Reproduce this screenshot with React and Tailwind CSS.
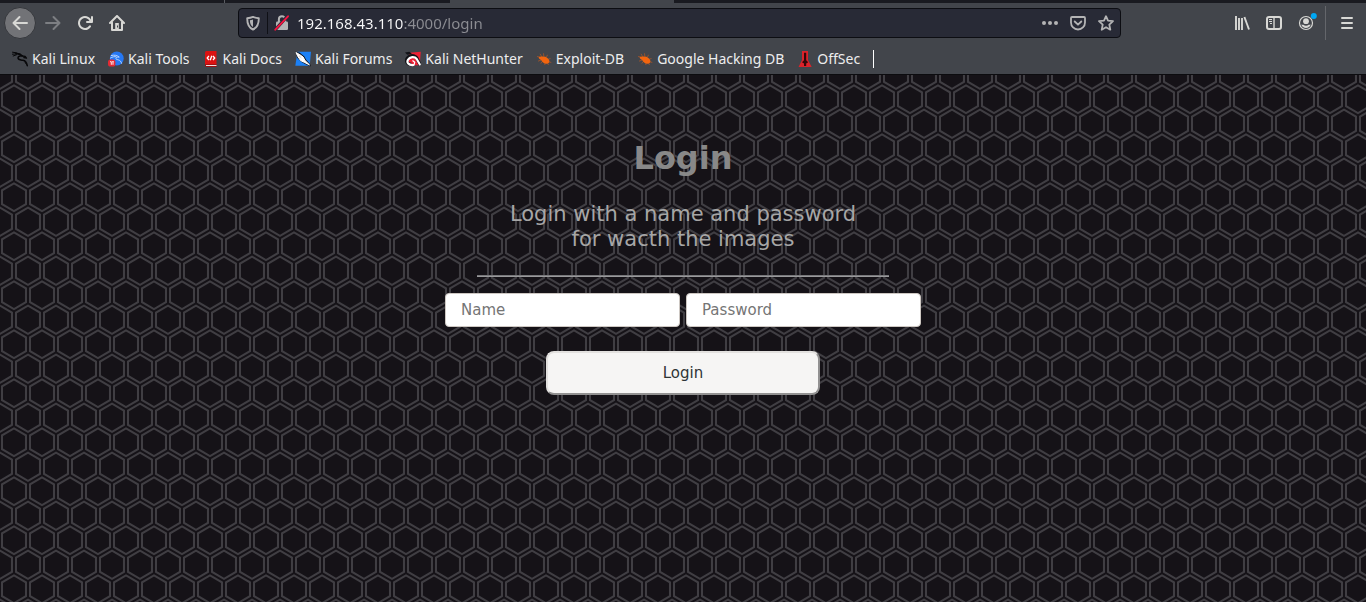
import React from "react";

const iconClass = "size-4 shrink-0";

function BackIcon() {
  return (
    <svg viewBox="0 0 16 16" className={iconClass} fill="none" stroke="currentColor" strokeWidth="2" strokeLinecap="round" strokeLinejoin="round">
      <path d="M15 8H1.5M7.500 2L1.500 8l6 6" />
    </svg>
  );
}

function ForwardIcon() {
  return (
    <svg viewBox="0 0 16 16" className={iconClass} fill="none" stroke="currentColor" strokeWidth="2" strokeLinecap="round" strokeLinejoin="round">
      <path d="M1 8h13.500M8.500 2l6 6-6 6" />
    </svg>
  );
}

function ReloadIcon() {
  return (
    <svg viewBox="0 0 16 16" className={iconClass} fill="currentColor">
      <path d="M15 1a1 1 0 0 0-1 1v2.420A7 7 0 1 0 8 15a7 7 0 0 0 5.800-3.080 1 1 0 1 0-1.660-1.120A5 5 0 1 1 12.540 6H10a1 1 0 0 0 0 2h5a1 1 0 0 0 1-1V2a1 1 0 0 0-1-1z" />
    </svg>
  );
}

function HomeIcon() {
  return (
    <svg viewBox="0 0 16 16" className={iconClass} fill="none" stroke="currentColor" strokeWidth="2" strokeLinecap="round" strokeLinejoin="round">
      <path d="M1 8l7-7 7 7" />
      <path d="M3 7.500V15h10V7.500" />
      <path d="M8 8v6.500" strokeWidth="3.600" strokeLinecap="butt" />
      <path d="M8.500 10.500v2" stroke="#42454b" strokeWidth="1" strokeLinecap="butt" />
    </svg>
  );
}

function ShieldIcon() {
  return (
    <svg viewBox="0 0 16 16" className={iconClass}>
      <path d="M8 1.900c-2 .9-4 1.200-5.800 1.300 0 5.300 1 9.300 5.800 11.300 4.800-2 5.800-6 5.800-11.300C12 3.100 10 2.800 8 1.900z" fill="none" stroke="currentColor" strokeWidth="1.900" strokeLinejoin="round" />
      <path d="M8 4.500c-1 .5-2 .7-3.100.8.1 3.200.7 5.300 3.100 6.700z" fill="currentColor" />
    </svg>
  );
}

function InsecureIcon() {
  return (
    <svg viewBox="0 0 16 16" className={iconClass}>
      <path d="M4.900 7V4.300a3.100 3.100 0 0 1 6.200 0V7" fill="none" stroke="currentColor" strokeWidth="2" />
      <rect x="2" y="6.500" width="12" height="8.500" rx="1.200" fill="currentColor" />
      <path d="M.8 15.200L13.800.8" stroke="#282a36" strokeWidth="3.200" />
      <path d="M1.300 14.700L14 1.300" stroke="#f8123f" strokeWidth="1.900" strokeLinecap="round" />
    </svg>
  );
}

function MoreIcon() {
  return (
    <svg viewBox="0 0 16 16" className={iconClass} fill="currentColor">
      <circle cx="2" cy="8" r="2" />
      <circle cx="8" cy="8" r="2" />
      <circle cx="14" cy="8" r="2" />
    </svg>
  );
}

function PocketIcon() {
  return (
    <svg viewBox="0 0 16 16" className={iconClass} fill="none" stroke="currentColor" strokeLinecap="round" strokeLinejoin="round">
      <path d="M2 2h12a1 1 0 0 1 1 1v4.500a7 7 0 0 1-14 0V3a1 1 0 0 1 1-1z" strokeWidth="1.800" />
      <path d="M4.700 6.500L8 9.700l3.300-3.200" strokeWidth="1.800" />
    </svg>
  );
}

function StarIcon() {
  return (
    <svg viewBox="0 0 16 16" className={iconClass} fill="none" stroke="currentColor" strokeWidth="1.800" strokeLinejoin="round">
      <path d="M8 1.200l2 4.500 5 .5-3.700 3.400 1 5.100L8 12.200l-4.300 2.500 1-5.100L1 6.200l5-.5z" />
    </svg>
  );
}

function LibraryIcon() {
  return (
    <svg viewBox="0 0 16 16" className={iconClass} fill="none" stroke="currentColor">
      <path d="M2 1v14M5 3v12M8 3v12" strokeWidth="1.900" />
      <path d="M10.400 2l4.600 12.500" strokeWidth="1.900" />
    </svg>
  );
}

function SidebarIcon() {
  return (
    <svg viewBox="0 0 16 16" className={iconClass} fill="none" stroke="currentColor">
      <rect x="1" y="2" width="14" height="12" rx="2" strokeWidth="2" />
      <path d="M8 2v12" strokeWidth="1.400" />
      <path d="M3 4.500h3M3 6.500h3M4 8.500h2" strokeWidth="1" />
    </svg>
  );
}

function AccountIcon() {
  return (
    <svg viewBox="0 0 16 16" className="size-4 shrink-0 overflow-visible">
      <circle cx="8" cy="8" r="6.500" fill="none" stroke="currentColor" strokeWidth="1.200" />
      <circle cx="8" cy="6.200" r="2.900" fill="currentColor" />
      <path d="M3.300 9.500c.8.3 1.500.4 2 .2.800.8 1.700 1.100 2.700 1.100s1.900-.3 2.700-1.100c.5.2 1.200.1 2-.2-.6 2.200-2.400 3.600-4.700 3.600S3.900 11.700 3.300 9.500z" fill="currentColor" />
      <circle cx="15.800" cy="1" r="3" fill="#00a8f5" />
    </svg>
  );
}

function MenuIcon() {
  return (
    <svg viewBox="0 0 16 16" className={iconClass} fill="none" stroke="currentColor" strokeWidth="2" strokeLinecap="round">
      <path d="M3 3h10M3 8h10M3 13h10" />
    </svg>
  );
}

function DragonIcon() {
  return (
    <svg viewBox="0 0 16 16" className={iconClass} fill="none" stroke="#08080a" strokeLinecap="round" strokeLinejoin="round">
      <path d="M.5 1.200l4 .6 2.500 1.400M.3 3.200l4-.3M1.200 5l3.300-1.200" strokeWidth="1" />
      <path d="M4 2.700c2.300-.1 4.500.3 6 2.100" strokeWidth="1.700" />
      <path d="M10 4.800c-2-.3-4 .7-4 2.300 0 2 2.500 1.900 5 2.200 2.300.3 3.600 1.900 4.300 5.400" strokeWidth="1.500" />
      <path d="M10 4.800l3.200.7 1.300 1.700-2.700-.5" strokeWidth="1.300" />
      <path d="M13.300 10.300c-.9 1.600 1 2.500 1.900 4" strokeWidth="1" />
    </svg>
  );
}

function ToolsIcon() {
  return (
    <svg viewBox="0 0 16 16" className={iconClass}>
      <circle cx="8.800" cy="7.500" r="6.900" fill="#2578f5" />
      <path d="M3.300 4.500c3-.8 6-.3 7.600 1.400M2.500 7c2-1.300 4-1.600 5.500-1.200M11 6c-2.200-.2-3.600.8-3 1.900.8 1.300 4.700.2 5.600 4.400" fill="none" stroke="#bcd7ff" strokeWidth="1" strokeLinecap="round" />
      <rect x="0" y="8.600" width="7.400" height="7" rx="2.600" fill="#e42a34" />
      <path d="M2 10.700h1.300v3.100M5 10.500v3.300M4.200 10.700h1.500" fill="none" stroke="#fff" strokeWidth=".9" />
    </svg>
  );
}

function DocsIcon() {
  return (
    <svg viewBox="0 0 16 16" className={iconClass}>
      <path d="M3 0h10.500v13.700H2V1.200z" fill="#dc1212" />
      <path d="M2 13.300h11.500V16H3.200L2 14.700z" fill="#9d0e10" />
      <path d="M3 14h10.500v1H3z" fill="#f1dfdf" />
      <path d="M5.900 5L4.200 7l1.700 2M10 5l1.700 2L10 9M8.800 4.700L7.200 9.300" fill="none" stroke="#fff" strokeWidth="1.300" />
    </svg>
  );
}

function ForumsIcon() {
  return (
    <svg viewBox="0 0 16 16" className={iconClass}>
      <path d="M2.500.7H16l-1.300 14H.3z" fill="#1b80f5" />
      <path d="M0 .8l4.500.7 4.700 3.700 2 3.600 4.600 5.200-.4 1.500L10 13 6.500 11 2.500 7.300z" fill="#15161b" />
      <path d="M.9 1.500l4 2.200 3.300 2.400 1.600 3.200 4.700 4.600-5.300-2.600-3.600-1.700L3 5.800z" fill="#fff" stroke="#fff" strokeWidth="1" strokeLinejoin="round" />
      <path d="M4 4.800l2.300 2" stroke="#9aa4b5" strokeWidth=".6" />
    </svg>
  );
}

function NetHunterIcon() {
  return (
    <svg viewBox="0 0 16 16" className={iconClass}>
      <path d="M4.500 1.800L15.800.8l-1.100 13.500H3z" fill="#ed2034" />
      <path d="M0 1.500l4.400-.7 2.500 2-4.600 1z" fill="#121318" />
      <path d="M6.500 13.500C2 13.300.6 10 2.400 7.300 4.500 4 9.500 3.500 12 7.500l3 6.300" fill="none" stroke="#121318" strokeWidth="3.400" />
      <path d="M8.500 14C3.300 14.400 1.500 11.500 3 8.800c1.800-3.300 6.600-3.600 8.700-.8l3 5.300" fill="none" stroke="#fff" strokeWidth="2.200" strokeLinecap="round" />
      <path d="M7.500 9.500l2.200 1.800-.7 2.500" fill="none" stroke="#fff" strokeWidth="1.200" />
    </svg>
  );
}

function BugIcon() {
  return (
    <svg viewBox="0 0 16 16" className={iconClass}>
      <path d="M4 2.800l1.800 3M7.500 2.300l.3 3M11.500 3.800l-1 2.200M1 5.500l3 .5M2 10.200l3-1.200M4.800 12.500l1.500-2M8.800 14l.2-2M14.500 7.500l-2.500.8M15.300 11.500l-2.500-.8M12.500 14l-1-2" fill="none" stroke="#a85527" strokeWidth=".8" />
      <path d="M2.600 6.300c1.300-1.200 3-.9 4.200-.7 2.700-.5 5.600 1.300 6.500 4 .3 1.200-.2 2.800-1.500 3-2.600.5-5.600-.8-6.700-3.600-.9-.4-2.300-1.200-2.500-2.700z" fill="#f3650f" />
    </svg>
  );
}

function OffSecIcon() {
  return (
    <svg viewBox="0 0 16 16" className={iconClass}>
      <path d="M5 0h6v9l3.700 7H1.500L5 9z" fill="#dc222a" />
      <path d="M7 1.800h2.200v7.500l2 2-2 1.200V15H7v-2.500l-2-1.200 2-2z" fill="#34070a" />
    </svg>
  );
}

const bookmarks = [
  { label: "Kali Linux", Icon: DragonIcon },
  { label: "Kali Tools", Icon: ToolsIcon },
  { label: "Kali Docs", Icon: DocsIcon },
  { label: "Kali Forums", Icon: ForumsIcon },
  { label: "Kali NetHunter", Icon: NetHunterIcon },
  { label: "Exploit-DB", Icon: BugIcon },
  { label: "Google Hacking DB", Icon: BugIcon },
  { label: "OffSec", Icon: OffSecIcon },
];

function ToolButton({ label, className = "", children }) {
  return (
    <button type="button" aria-label={label} className={`flex size-8 shrink-0 items-center justify-center ${className}`}>
      {children}
    </button>
  );
}

function TabStrip() {
  return (
    <div className="flex h-[3px] bg-[#0c0d11]">
      <div className="w-[225px] border-r border-[#5a5c62] bg-[#191a20]" />
      <div className="w-[225px] bg-[#191a20]" />
      <div className="w-56 bg-[#42454b]" />
      <div className="flex-1 bg-[#191a20]" />
    </div>
  );
}

function NavBar() {
  return (
    <div className="flex h-10 items-center pl-1 text-[#d8d8d5]">
      <ToolButton label="Back" className="rounded-full border border-[#35373c] bg-[#727377]">
        <BackIcon />
      </ToolButton>
      <ToolButton label="Forward" className="ml-px text-[#7d7f83]">
        <ForwardIcon />
      </ToolButton>
      <ToolButton label="Reload">
        <ReloadIcon />
      </ToolButton>
      <ToolButton label="Home">
        <HomeIcon />
      </ToolButton>
      <div className="mx-[105px] flex h-[30px] min-w-0 flex-1 items-center rounded-[4px] border border-[#0c0d12] bg-[#282a36] text-[#b4b4b5]">
        <button type="button" aria-label="Tracking protection" className="flex h-7 w-7 items-center justify-center">
          <ShieldIcon />
        </button>
        <span className="h-[22px] w-px bg-[#0f1016]" />
        <button type="button" aria-label="Connection is not secure" className="flex h-7 w-7 items-center justify-center">
          <InsecureIcon />
        </button>
        <input
          aria-label="Address"
          defaultValue="192.168.43.110:4000/login"
          className="h-7 min-w-0 flex-1 bg-[linear-gradient(90deg,#f9f9fa_107px,#8c8d93_107px)] bg-clip-text pl-px text-[15px] text-transparent outline-none"
        />
        <div className="flex gap-3 pr-[6px]">
          <button type="button" aria-label="Page actions"><MoreIcon /></button>
          <button type="button" aria-label="Save to Pocket"><PocketIcon /></button>
          <button type="button" aria-label="Bookmark this page"><StarIcon /></button>
        </div>
      </div>
      <ToolButton label="Library">
        <LibraryIcon />
      </ToolButton>
      <ToolButton label="Sidebars">
        <SidebarIcon />
      </ToolButton>
      <ToolButton label="Account">
        <AccountIcon />
      </ToolButton>
      <span className="ml-[3px] h-[34px] w-px bg-[#64666b]" />
      <ToolButton label="Open menu" className="mr-[3px] ml-[5px]">
        <MenuIcon />
      </ToolButton>
    </div>
  );
}

function BookmarksBar() {
  return (
    <nav aria-label="Bookmarks" className="flex h-[31px] items-center gap-[13px] pl-3 text-[#ededee]">
      {bookmarks.map(({ label, Icon }) => (
        <a key={label} href="#" className="flex shrink-0 items-center gap-1 text-[14px] leading-5">
          <Icon />
          {label}
        </a>
      ))}
      <span className="h-[18px] w-px bg-white" />
    </nav>
  );
}

function Honeycomb() {
  return (
    <svg aria-hidden="true" className="absolute inset-0 size-full">
      <defs>
        <pattern id="honeycomb" width="28" height="49" patternUnits="userSpaceOnUse">
          <path
            fill="#403e43"
            d="M13.990 9.250l13 7.500v15l-13 7.500L1 31.750v-15l12.990-7.500zM3 17.900v12.700l10.990 6.340 11-6.350V17.900l-11-6.340L3 17.900zM0 15l12.980-7.500V0h-2v6.350L0 12.690v2.300zm0 18.500L12.980 41v8h-2v-6.850L0 35.810v-2.300zM15 0v7.500L27.990 15H28v-2.310h-.01L17 6.350V0h-2zm0 49v-8l12.990-7.500H28v2.310h-.01L17 42.150V49h-2z"
          />
        </pattern>
      </defs>
      <rect width="100%" height="100%" fill="url(#honeycomb)" />
    </svg>
  );
}

function LoginPage() {
  const field =
    "h-[34px] w-[235px] rounded-[4px] border border-[#cdc7c2] bg-white px-[15px] text-[15px] text-[#333] placeholder:text-[#757575] placeholder:opacity-100";
  return (
    <main className="relative flex-1 bg-[#151217] font-['DejaVu_Sans',sans-serif]">
      <Honeycomb />
      <div className="relative flex flex-col items-center pt-16 pb-16 text-center">
        <h1 className="text-[32px] leading-[38px] font-bold text-[#888]">Login</h1>
        <p className="mt-[25px] text-[21px] leading-[25px] text-[#a6a6a6]">
          Login with a name and password
          <br />
          for wacth the images
        </p>
        <hr className="mt-[23px] h-[2px] w-[412px] border-t border-b border-t-[#77777a] border-b-[#9a9a9c]" />
        <form className="mt-4 flex flex-col items-center" onSubmit={(e) => e.preventDefault()}>
          <div className="flex flex-wrap justify-center gap-[6px]">
            <input type="text" aria-label="Name" placeholder="Name" className={field} />
            <input type="password" aria-label="Password" placeholder="Password" className={field} />
          </div>
          <button
            type="submit"
            className="mt-6 h-11 w-[274px] rounded-[8px] border-2 border-t-[#e3e1df] border-r-[#929191] border-b-[#929191] border-l-[#e3e1df] bg-[#f6f5f4] text-[15px] text-[#2e3436]"
          >
            Login
          </button>
        </form>
      </div>
    </main>
  );
}

export default function App() {
  return (
    <div className="flex min-h-screen flex-col bg-[#151217] font-['Noto_Sans',sans-serif]">
      <header className="border-b border-[#0c0c0f] bg-[#42454b]">
        <TabStrip />
        <NavBar />
        <BookmarksBar />
      </header>
      <LoginPage />
    </div>
  );
}
